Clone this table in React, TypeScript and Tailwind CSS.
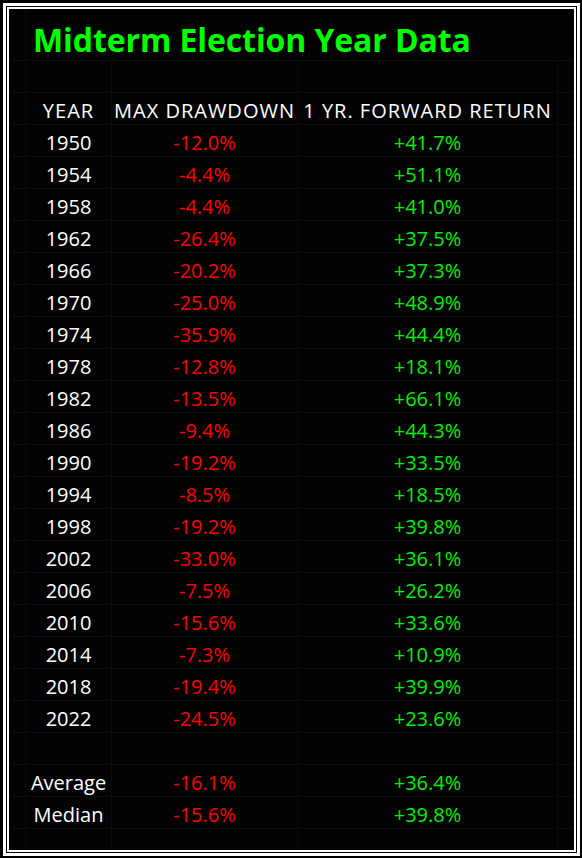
import React from "react";

const rows: [string, string, string][] = [
  ["1950", "-12.0%", "+41.7%"],
  ["1954", "-4.4%", "+51.1%"],
  ["1958", "-4.4%", "+41.0%"],
  ["1962", "-26.4%", "+37.5%"],
  ["1966", "-20.2%", "+37.3%"],
  ["1970", "-25.0%", "+48.9%"],
  ["1974", "-35.9%", "+44.4%"],
  ["1978", "-12.8%", "+18.1%"],
  ["1982", "-13.5%", "+66.1%"],
  ["1986", "-9.4%", "+44.3%"],
  ["1990", "-19.2%", "+33.5%"],
  ["1994", "-8.5%", "+18.5%"],
  ["1998", "-19.2%", "+39.8%"],
  ["2002", "-33.0%", "+36.1%"],
  ["2006", "-7.5%", "+26.2%"],
  ["2010", "-15.6%", "+33.6%"],
  ["2014", "-7.3%", "+10.9%"],
  ["2018", "-19.4%", "+39.9%"],
  ["2022", "-24.5%", "+23.6%"],
];

const font = { fontFamily: "'Comic Sans MS', 'Open Sans', 'DejaVu Sans', sans-serif" };

function Cell({ children, className = "" }: { children?: React.ReactNode; className?: string }) {
  return (
    <div className={`flex items-center justify-center whitespace-nowrap border-r border-b border-[#0c0c0c] pt-[4px] ${className}`}>
      {children}
    </div>
  );
}

function Row({
  a,
  b,
  c,
  aClass = "text-white",
  bClass = "text-[#ff0000]",
  cClass = "text-[#00f000]",
  header = false,
}: {
  a?: React.ReactNode;
  b?: React.ReactNode;
  c?: React.ReactNode;
  aClass?: string;
  bClass?: string;
  cClass?: string;
  header?: boolean;
}) {
  return (
    <div className={`grid grid-cols-[17px_86px_186px_260px_1fr] h-[32px] ${header ? "tracking-[1px]" : ""}`}>
      <Cell />
      <Cell className={aClass}>{a}</Cell>
      <Cell className={bClass}>{b}</Cell>
      <Cell className={cClass}>{c}</Cell>
      <Cell />
    </div>
  );
}

export default function App() {
  return (
    <div className="w-[582px] h-[858px] bg-black pt-[3px] pl-[3px] pr-[2px] pb-[2px]" style={font}>
      <div className="h-full border-[3px] border-white p-[1px]">
        <div className="h-full border-2 border-white bg-[#030303] flex flex-col overflow-hidden text-[20px] leading-none">
          <div className="grid grid-cols-[17px_1fr] h-[52px]">
            <div className="border-r border-b border-[#0c0c0c]" />
            <div className="flex items-center border-b border-[#0c0c0c] pl-[7px] pt-[11px] text-[#00ff00] font-bold text-[32px] whitespace-nowrap tracking-[-0.1px]">
              Midterm Election Year Data
            </div>
          </div>
          <Row />
          <Row
            header
            a="YEAR"
            b="MAX DRAWDOWN"
            c="1 YR. FORWARD RETURN"
            bClass="text-white"
            cClass="text-white"
          />
          {rows.map((r) => (
            <Row key={r[0]} a={r[0]} b={r[1]} c={r[2]} />
          ))}
          <Row />
          <Row a="Average" b="-16.1%" c="+36.4%" />
          <Row a="Median" b="-15.6%" c="+39.8%" />
          <div className="grid grid-cols-[17px_86px_186px_260px_1fr] flex-1">
            <div className="border-r border-[#0c0c0c]" />
            <div className="border-r border-[#0c0c0c]" />
            <div className="border-r border-[#0c0c0c]" />
            <div className="border-r border-[#0c0c0c]" />
            <div />
          </div>
        </div>
      </div>
    </div>
  );
}
